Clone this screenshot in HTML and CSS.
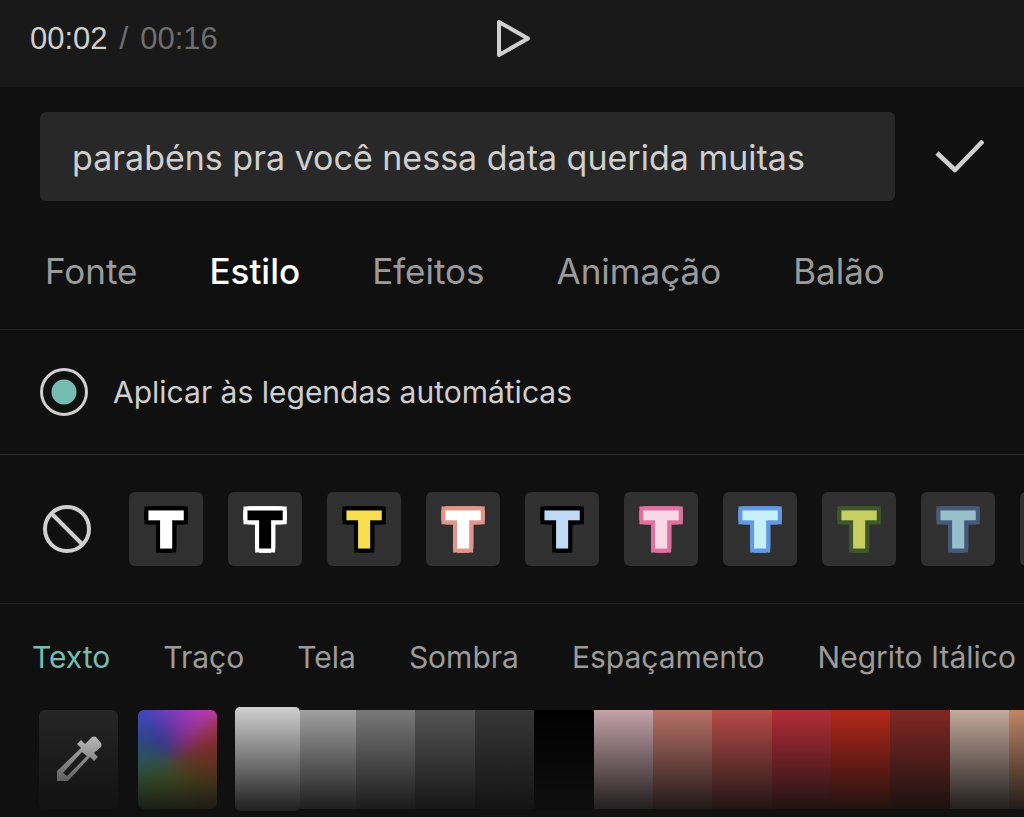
FILE: index.html
```html
<!DOCTYPE html>
<html lang="pt-BR">
<head>
<meta charset="utf-8">
<meta name="viewport" content="width=device-width, initial-scale=1">
<title>Estilo do texto</title>
<link rel="stylesheet" href="styles.css">
</head>
<body>
<div class="editor">
  <header class="player">
    <div class="time"><span class="now">00:02</span><span class="slash">/</span><span class="total">00:16</span></div>
    <button class="icon-button" type="button" aria-label="Reproduzir">
      <svg width="36" height="40" viewBox="0 0 36 40" fill="none" stroke="#cfcfcf" stroke-width="4" stroke-linejoin="round"><path d="M5 3V36L34 19.500Z"/></svg>
    </button>
  </header>

  <form class="caption">
    <input class="caption-input" type="text" aria-label="Legenda" value="parabéns pra você nessa data querida muitas">
    <button class="icon-button" type="button" aria-label="Confirmar">
      <svg width="50" height="34" viewBox="0 0 50 34" fill="none" stroke="#cfcfcf" stroke-width="4.500" stroke-linejoin="round"><path d="M3 13L21 30L49 1"/></svg>
    </button>
  </form>

  <nav class="tabs">
    <button type="button">Fonte</button>
    <button class="active" type="button">Estilo</button>
    <button type="button">Efeitos</button>
    <button type="button">Animação</button>
    <button type="button">Balão</button>
  </nav>

  <div class="apply">
    <input class="apply-radio" type="radio" id="apply" checked>
    <label for="apply">Aplicar às legendas automáticas</label>
  </div>

  <div class="presets">
    <button class="icon-button none" type="button" aria-label="Nenhum">
      <svg width="50" height="50" viewBox="0 0 50 50" fill="none" stroke="#cfcfcf" stroke-width="4"><circle cx="25" cy="25" r="22"/><path d="M9 9L41 41"/></svg>
    </button>
    <button class="preset white" type="button"><svg viewBox="0 0 74 74"><text x="37" y="55">T</text></svg></button>
    <button class="preset black" type="button"><svg viewBox="0 0 74 74"><text x="37" y="55">T</text></svg></button>
    <button class="preset yellow" type="button"><svg viewBox="0 0 74 74"><text x="37" y="55">T</text></svg></button>
    <button class="preset coral" type="button"><svg viewBox="0 0 74 74"><text x="37" y="55">T</text></svg></button>
    <button class="preset sky" type="button"><svg viewBox="0 0 74 74"><text x="37" y="55">T</text></svg></button>
    <button class="preset pink" type="button"><svg viewBox="0 0 74 74"><text x="37" y="55">T</text></svg></button>
    <button class="preset blue" type="button"><svg viewBox="0 0 74 74"><text x="37" y="55">T</text></svg></button>
    <button class="preset lime" type="button"><svg viewBox="0 0 74 74"><text x="37" y="55">T</text></svg></button>
    <button class="preset slate" type="button"><svg viewBox="0 0 74 74"><text x="37" y="55">T</text></svg></button>
    <button class="preset" type="button" aria-label="Mais"></button>
  </div>

  <nav class="subtabs">
    <button class="active" type="button">Texto</button>
    <button type="button">Traço</button>
    <button type="button">Tela</button>
    <button type="button">Sombra</button>
    <button type="button">Espaçamento</button>
    <button type="button">Negrito Itálico</button>
  </nav>

  <div class="colors">
    <button class="tool picker" type="button" aria-label="Conta-gotas">
      <svg width="48" height="48" viewBox="0 0 48 48"><path fill="#f4f4f4" fill-rule="evenodd" d="M2 46V36L26 13L22 9L26 5L30 9L37 2Q39 1 41 2L46 8Q47 10 46 12L39 18L43 22L39 26L35 22L13 46ZM8 38L12 41L32 21L27 17Z"/></svg>
    </button>
    <button class="tool spectrum" type="button" aria-label="Espectro"></button>
    <div class="palette">
      <button class="selected" type="button" aria-label="Branco"></button>
      <button class="g1" type="button" aria-label="Cinza claro"></button>
      <button class="g2" type="button" aria-label="Cinza"></button>
      <button class="g3" type="button" aria-label="Cinza médio"></button>
      <button class="g4" type="button" aria-label="Cinza escuro"></button>
      <button class="g5" type="button" aria-label="Preto"></button>
      <button class="r1" type="button" aria-label="Rosa"></button>
      <button class="r2" type="button" aria-label="Salmão"></button>
      <button class="r3" type="button" aria-label="Coral"></button>
      <button class="r4" type="button" aria-label="Carmim"></button>
      <button class="r5" type="button" aria-label="Vermelho"></button>
      <button class="r6" type="button" aria-label="Vinho"></button>
      <button class="o1" type="button" aria-label="Bege"></button>
      <button class="o2" type="button" aria-label="Laranja"></button>
    </div>
  </div>
</div>
</body>
</html>
```
FILE: styles.css
```css
* { box-sizing: border-box; }

body {
  margin: 0;
  min-height: 100vh;
  background: #101010;
  color: #cfcfcf;
  font-family: Inter, "Liberation Sans", sans-serif;
  overflow-x: hidden;
}

button {
  padding: 0;
  border: 0;
  background: none;
  color: inherit;
  font: inherit;
  white-space: nowrap;
  cursor: pointer;
}

.icon-button { display: flex; flex: none; }

.player {
  display: grid;
  grid-template-columns: 1fr auto 1fr;
  align-items: center;
  height: 87px;
  padding: 0 30px 10px;
  background: #191919;
}

.time {
  display: flex;
  gap: 12px;
  font-family: "Liberation Sans", sans-serif;
  font-size: 31px;
}
.slash, .total { color: #6e6e6e; }

.caption {
  display: flex;
  align-items: center;
  gap: 39px;
  padding: 25px 40px 0;
}
.caption-input {
  flex: 1;
  min-width: 0;
  height: 89px;
  padding: 2px 32px 0;
  border: 0;
  border-radius: 6px;
  background: #282828;
  color: #cfcfcf;
  font: 400 34px Inter, "Liberation Sans", sans-serif;
}

.tabs {
  display: flex;
  gap: 72px;
  padding: 45px 45px 33px;
  border-bottom: 1px solid #222;
  color: #9b9b9b;
  font-size: 35px;
  line-height: 50px;
}
.tabs .active { color: #fff; font-weight: 500; }

.apply {
  display: flex;
  align-items: center;
  gap: 25px;
  height: 125px;
  padding: 0 40px;
  border-bottom: 1px solid #2b2b2b;
  font-size: 30px;
}
.apply-radio {
  appearance: none;
  width: 48px;
  height: 48px;
  margin: 0;
  border: 3px solid #cfcfcf;
  border-radius: 50%;
}
.apply-radio:checked { background: radial-gradient(circle, #76bdb1 12px, transparent 13px); }

.presets {
  display: flex;
  align-items: center;
  gap: 25px;
  height: 149px;
  padding-left: 42px;
  border-bottom: 1px solid #1f1f1f;
  overflow: hidden;
}
.none { margin-right: 12px; }
.preset {
  flex: none;
  width: 74px;
  height: 74px;
  border-radius: 6px;
  background: #303030;
}
.preset svg { display: block; overflow: visible; }
.preset text {
  font: 700 48px "DejaVu Sans", sans-serif;
  text-anchor: middle;
  fill: var(--face);
  stroke: var(--face);
  stroke-width: 3px;
  stroke-linejoin: miter;
}
.preset svg {
  filter: drop-shadow(4px 0 0 var(--edge)) drop-shadow(-4px 0 0 var(--edge)) drop-shadow(0 4px 0 var(--edge)) drop-shadow(0 -4px 0 var(--edge));
}
.white { --face: #fff; --edge: #000; }
.black { --face: #000; --edge: #fff; }
.yellow { --face: #f8df50; --edge: #000; }
.coral { --face: #fff; --edge: #e2958a; }
.sky { --face: #bedaf4; --edge: #000; }
.pink { --face: #f8d8e6; --edge: #de719d; }
.blue { --face: #c5eff9; --edge: #6399e2; }
.lime { --face: #c5cf62; --edge: #40562c; }
.slate { --face: #98bfcc; --edge: #495a79; }

.subtabs {
  display: flex;
  gap: 53px;
  padding: 32px 0 29px 32px;
  color: #9b9b9b;
  font-size: 30px;
  line-height: 42px;
  overflow: hidden;
}
.subtabs .active { color: #76bdb1; }

.colors {
  position: relative;
  display: flex;
  align-items: center;
  height: 104px;
  padding-left: 39px;
}
.colors::after {
  content: "";
  position: absolute;
  inset: 0;
  background: linear-gradient(rgba(16, 16, 16, 0), rgba(16, 16, 16, 0.92));
  pointer-events: none;
}
.tool {
  display: grid;
  place-items: center;
  flex: none;
  width: 79px;
  height: 99px;
  margin-right: 20px;
  border-radius: 6px;
}
.picker { background: #262626; }
.spectrum {
  position: relative;
  margin-right: 18px;
  overflow: hidden;
}
.spectrum::before {
  content: "";
  position: absolute;
  inset: -20px;
  background: conic-gradient(from 0deg at 48% 50%, #8a3cc0, #c03cc0 35deg, #b43c44 55deg, #b04434 85deg, #a4702e 120deg, #84963c 175deg, #70a040 220deg, #4c9a90 260deg, #3e60b4 295deg, #3c48c4 325deg, #8a3cc0);
  filter: blur(9px);
}

.palette {
  display: flex;
  flex: 1;
  align-items: center;
  min-width: 0;
}
.palette button { flex: 4 1 0; height: 99px; }
.palette .selected {
  flex: none;
  width: 65px;
  height: 104px;
  border-radius: 5px;
  background: #d0d0d0;
}
.palette .g1 { flex: none; width: 56px; background: #a4a4a4; }
.g2 { background: #7c7c7c; }
.g3 { background: #565656; }
.g4 { background: #383838; }
.g5 { background: #000; }
.r1 { background: #c8a6ac; }
.r2 { background: #bd746a; }
.r3 { background: #bb4d49; }
.r4 { background: #b82d37; }
.r5 { background: #ba271a; }
.r6 { background: #842824; }
.o1 { background: #c8ada0; }
.palette .o2 { flex-grow: 1; background: #c48a68; }
```
